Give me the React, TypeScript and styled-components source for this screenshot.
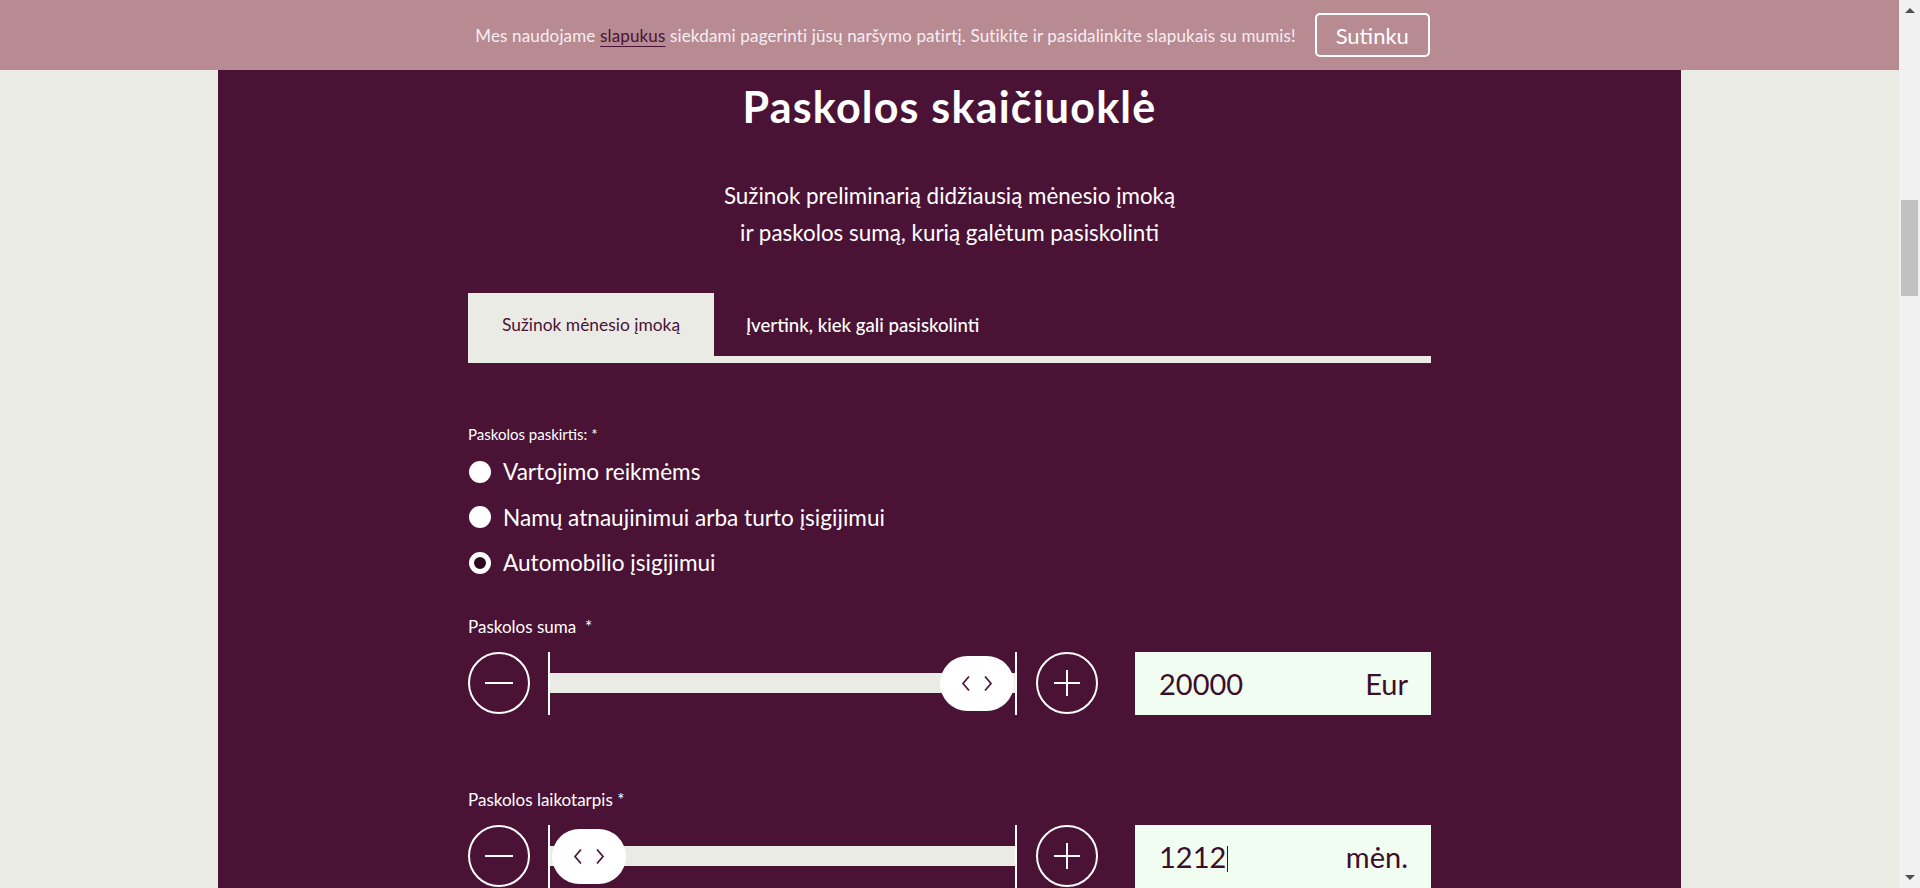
import React from 'react';
import styled, { createGlobalStyle } from 'styled-components';

const PURPLE = '#4a1336';
const LIGHT = '#ebebe6';

const GlobalStyle = createGlobalStyle`
  html, body { margin: 0; padding: 0; height: 100%; overflow: hidden; }
  body { font-family: Lato, "Noto Sans", sans-serif; background: ${LIGHT}; }
  * { box-sizing: border-box; }
`;

const Shell = styled.div`
  display: flex;
  width: 100vw;
  height: 100vh;
`;

const Viewport = styled.div`
  flex: 1;
  min-width: 0;
  display: flex;
  flex-direction: column;
  background: ${LIGHT};
  overflow: hidden;
`;

const CookieBar = styled.div`
  flex-shrink: 0;
  height: 70px;
  background: #b88b93;
  display: flex;
  align-items: center;
  justify-content: center;
  gap: 19px;
  padding-left: 6px;
`;

const CookieText = styled.p`
  margin: 0;
  font-size: 17px;
  color: #f7eef1;
  letter-spacing: 0.15px;
`;

const CookieLink = styled.a`
  color: ${PURPLE};
  text-decoration: underline;
  text-underline-offset: 4px;
  text-decoration-thickness: 1px;
`;

const AcceptButton = styled.button`
  width: 115px;
  height: 44px;
  border: 2px solid #ffffff;
  border-radius: 5px;
  background: transparent;
  color: #ffffff;
  font-family: Lato, "Noto Sans", sans-serif;
  font-size: 22px;
  padding: 0;
`;

const Panel = styled.main`
  flex: 1;
  width: 1463px;
  margin: 0 auto;
  background: ${PURPLE};
`;

const Content = styled.div`
  width: 963px;
  margin: 0 auto;
  display: flex;
  flex-direction: column;
`;

const Title = styled.h1`
  margin: 13px 0 0;
  text-align: center;
  font-size: 43px;
  line-height: 48px;
  font-weight: 700;
  letter-spacing: 1.2px;
  color: #ffffff;
`;

const Subtitle = styled.p`
  margin: 46px 0 0;
  text-align: center;
  font-size: 22.4px;
  line-height: 37px;
  color: #ffffff;
`;

const TabList = styled.div`
  margin-top: 42px;
  display: flex;
  border-bottom: 7px solid ${LIGHT};
`;

const Tab = styled.button<{ $active?: boolean }>`
  height: 63px;
  border: none;
  padding: 0 ${(p) => (p.$active ? '34px' : '32px')};
  background: ${(p) => (p.$active ? LIGHT : 'transparent')};
  color: ${(p) => (p.$active ? PURPLE : '#ffffff')};
  font-family: Lato, "Noto Sans", sans-serif;
  font-size: ${(p) => (p.$active ? '17.4px' : '18.6px')};
  font-weight: ${(p) => (p.$active ? 400 : 500)};
  display: flex;
  align-items: center;
`;

const FieldLabel = styled.div<{ $top: number; $size?: number }>`
  margin-top: ${(p) => p.$top}px;
  font-size: ${(p) => p.$size ?? 15}px;
  line-height: 20px;
  color: #ffffff;
`;

const RadioGroup = styled.div`
  margin-top: 5px;
  display: flex;
  flex-direction: column;
`;

const RadioRow = styled.label`
  height: 45.5px;
  display: flex;
  align-items: center;
  gap: 12px;
  font-size: 22.6px;
  color: #ffffff;
`;

const RadioDot = styled.span<{ $checked?: boolean }>`
  width: 22px;
  height: 22px;
  border-radius: 50%;
  background: ${(p) => (p.$checked ? '#2d0a20' : '#ffffff')};
  border: ${(p) => (p.$checked ? '5px solid #ffffff' : 'none')};
  flex-shrink: 0;
  margin-left: 1px;
`;

const SliderRow = styled.div`
  margin-top: 15px;
  display: flex;
  align-items: center;
  height: 63px;
  flex-shrink: 0;
`;

const RoundButton = styled.button<{ $gap?: number }>`
  width: 62px;
  height: 62px;
  flex-shrink: 0;
  border-radius: 50%;
  border: 2px solid #ffffff;
  background: transparent;
  padding: 0;
  margin-left: ${(p) => p.$gap ?? 0}px;
  display: flex;
  align-items: center;
  justify-content: center;
`;

const TrackArea = styled.div`
  position: relative;
  margin-left: 18px;
  width: 469px;
  height: 63px;
  border-left: 2px solid #ffffff;
  border-right: 2px solid #ffffff;
  display: flex;
  align-items: center;
`;

const TrackBar = styled.div`
  width: 100%;
  height: 20px;
  background: ${LIGHT};
`;

const Thumb = styled.div`
  position: absolute;
  top: 4px;
  width: 74px;
  height: 55px;
  border-radius: 28px;
  background: #ffffff;
  display: flex;
  align-items: center;
  justify-content: center;
  gap: 12px;
`;

const ValueBox = styled.div`
  margin-left: 37px;
  flex: 1;
  height: 63px;
  background: #f0fdf0;
  display: flex;
  align-items: center;
  justify-content: space-between;
  padding: 0 23px 0 24px;
  font-size: 29px;
  color: #3c0e2c;
`;

const Caret = styled.span`
  display: inline-block;
  width: 1px;
  height: 26px;
  background: #3c0e2c;
  vertical-align: -4px;
  margin-left: 1px;
`;

const ScrollRail = styled.div`
  width: 21px;
  flex-shrink: 0;
  background: #f1f1f1;
  display: flex;
  flex-direction: column;
`;

const ScrollArrow = styled.div<{ $down?: boolean }>`
  height: 21px;
  display: flex;
  align-items: center;
  justify-content: center;
  &::before {
    content: '';
    width: 0;
    height: 0;
    border-left: 5px solid transparent;
    border-right: 5px solid transparent;
    ${(p) => (p.$down ? 'border-top: 5px solid #505050;' : 'border-bottom: 5px solid #505050;')}
  }
`;

const ScrollTrack = styled.div`
  flex: 1;
  padding: 0 2px;
`;

const ScrollThumb = styled.div<{ $offset: number; $size: number }>`
  margin-top: ${(p) => p.$offset}px;
  height: ${(p) => p.$size}px;
  background: #c1c1c1;
`;

const Chevrons = () => (
  <>
    <svg width="10" height="17" viewBox="0 0 10 17" fill="none">
      <path d="M8 1.5 L2 8.5 L8 15.5" stroke="#4a1336" strokeWidth="1.7" />
    </svg>
    <svg width="10" height="17" viewBox="0 0 10 17" fill="none">
      <path d="M2 1.5 L8 8.5 L2 15.5" stroke="#4a1336" strokeWidth="1.7" />
    </svg>
  </>
);

const MinusIcon = () => (
  <svg width="28" height="4" viewBox="0 0 28 4">
    <line x1="0" y1="2" x2="28" y2="2" stroke="#ffffff" strokeWidth="2" />
  </svg>
);

const PlusIcon = () => (
  <svg width="28" height="28" viewBox="0 0 28 28">
    <line x1="1" y1="14" x2="27" y2="14" stroke="#ffffff" strokeWidth="2" />
    <line x1="14" y1="1" x2="14" y2="27" stroke="#ffffff" strokeWidth="2" />
  </svg>
);

type SliderProps = { value: React.ReactNode; unit: string; ratio: number };

const Slider = ({ value, unit, ratio }: SliderProps) => (
  <SliderRow>
    <RoundButton aria-label="minus">
      <MinusIcon />
    </RoundButton>
    <TrackArea>
      <TrackBar />
      <Thumb style={{ left: `calc(2px + (100% - 77px) * ${ratio})` }}>
        <Chevrons />
      </Thumb>
    </TrackArea>
    <RoundButton $gap={19} aria-label="plus">
      <PlusIcon />
    </RoundButton>
    <ValueBox>
      <span>{value}</span>
      <span>{unit}</span>
    </ValueBox>
  </SliderRow>
);

export default function App() {
  return (
    <>
      <GlobalStyle />
      <Shell>
        <Viewport>
          <CookieBar>
            <CookieText>
              Mes naudojame <CookieLink>slapukus</CookieLink> siekdami pagerinti jūsų naršymo patirtį. Sutikite ir
              pasidalinkite slapukais su mumis!
            </CookieText>
            <AcceptButton>Sutinku</AcceptButton>
          </CookieBar>
          <Panel>
            <Content>
              <Title>Paskolos skaičiuoklė</Title>
              <Subtitle>
                Sužinok preliminarią didžiausią mėnesio įmoką
                <br />
                ir paskolos sumą, kurią galėtum pasiskolinti
              </Subtitle>
              <TabList>
                <Tab $active>Sužinok mėnesio įmoką</Tab>
                <Tab>Įvertink, kiek gali pasiskolinti</Tab>
              </TabList>
              <FieldLabel $top={61}>Paskolos paskirtis: *</FieldLabel>
              <RadioGroup>
                <RadioRow>
                  <RadioDot />
                  Vartojimo reikmėms
                </RadioRow>
                <RadioRow>
                  <RadioDot />
                  Namų atnaujinimui arba turto įsigijimui
                </RadioRow>
                <RadioRow>
                  <RadioDot $checked />
                  Automobilio įsigijimui
                </RadioRow>
              </RadioGroup>
              <FieldLabel $top={31} $size={17}>
                Paskolos suma&nbsp; *
              </FieldLabel>
              <Slider value="20000" unit="Eur" ratio={1} />
              <FieldLabel $top={75} $size={17}>
                Paskolos laikotarpis *
              </FieldLabel>
              <Slider
                value={
                  <>
                    1212
                    <Caret />
                  </>
                }
                unit="mėn."
                ratio={0}
              />
            </Content>
          </Panel>
        </Viewport>
        <ScrollRail>
          <ScrollArrow />
          <ScrollTrack>
            <ScrollThumb $offset={179} $size={96} />
          </ScrollTrack>
          <ScrollArrow $down />
        </ScrollRail>
      </Shell>
    </>
  );
}
